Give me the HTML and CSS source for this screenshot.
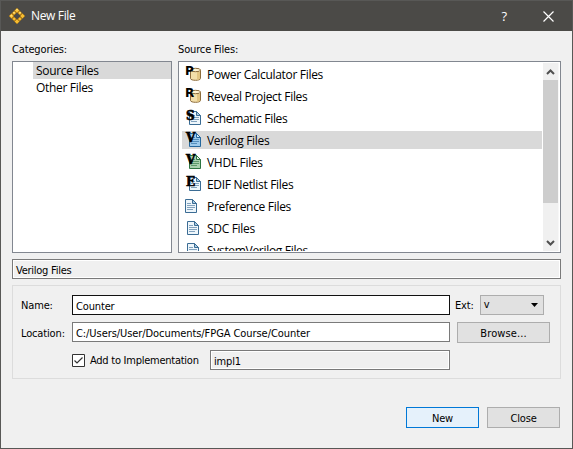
FILE: index.html
```html
<!DOCTYPE html>
<html lang="en">
<head>
<meta charset="utf-8">
<title>New File</title>
<link rel="stylesheet" href="styles.css">
</head>
<body>
<svg class="defs" width="0" height="0">
  <defs>
    <g id="sheet">
      <path class="page" d="M3.500 1.500h7l4 4v9h-11z"/>
      <path class="fold" d="M10.500 1.500v4h4z"/>
      <path class="rule" d="M5 5.500h4M5 7.500h8M5 9.500h8M5 11.500h6"/>
    </g>
    <g id="drum">
      <path d="M4.500 4v8.500c0 2.400 10 2.400 10 0V4z" fill="#f3dfaa" stroke="#8c6c3c"/>
      <path d="M11 6h3v7l-3 1z" fill="#e2c583"/>
      <ellipse cx="9.500" cy="4" rx="5" ry="1.700" fill="#fff4d2" stroke="#8c6c3c"/>
    </g>
  </defs>
</svg>
<div class="window">
  <header class="titlebar">
    <svg class="logo" width="16" height="16" viewBox="0 0 16 16">
      <path d="M8 2.200 13.800 8 8 13.800 2.200 8z" fill="none" stroke="#a87515" stroke-width="2"/>
      <g fill="#f6bd31" stroke="#a36f13" stroke-width=".5">
        <path d="M8 0l2.500 2.500L8 5 5.500 2.500zM8 11l2.500 2.500L8 16l-2.500-2.500zM2.500 5.500 5 8l-2.500 2.500L0 8zM13.500 5.500 16 8l-2.500 2.500L11 8z"/>
        <path d="M5.200 3l2 2-2 2-2-2zM10.800 3l2 2-2 2-2-2zM5.200 9l2 2-2 2-2-2zM10.800 9l2 2-2 2-2-2z"/>
      </g>
      <path d="M8 .8l1 1-1 1-1-1zM5 3.800l1 1-1 1-1-1zM2.200 6.800l1 1-1 1-1-1zM11 3.800l1 1-1 1-1-1z" fill="#ffe58a"/>
    </svg>
    <span class="title">New File</span>
    <span class="help">?</span>
    <svg class="x" width="11" height="11" viewBox="0 0 11 11"><path d="M.5.5l10 10M10.500.5l-10 10" stroke="#fff" stroke-width="1.200"/></svg>
  </header>
  <main class="content">
    <section class="lists">
      <div class="column categories">
        <div class="label">Categories:</div>
        <div class="list">
          <div class="cat selected">Source Files</div>
          <div class="cat">Other Files</div>
        </div>
      </div>
      <div class="column sources">
        <div class="label">Source Files:</div>
        <div class="list split">
          <div class="rows">
            <div class="row"><svg class="icon" viewBox="0 0 16 16"><use href="#drum"/><text x="-1" y="9">P</text></svg><span>Power Calculator Files</span></div>
            <div class="row"><svg class="icon" viewBox="0 0 16 16"><use href="#drum"/><text x="-1" y="9">R</text></svg><span>Reveal Project Files</span></div>
            <div class="row"><svg class="icon" viewBox="0 0 16 16"><use href="#sheet"/><text class="serif" x="0" y="10">S</text></svg><span>Schematic Files</span></div>
            <div class="row selected"><svg class="icon blue" viewBox="0 0 16 16"><use href="#sheet"/><text class="serif" x="0" y="10">V</text></svg><span>Verilog Files</span></div>
            <div class="row"><svg class="icon green" viewBox="0 0 16 16"><use href="#sheet"/><text class="serif" x="0" y="10">V</text></svg><span>VHDL Files</span></div>
            <div class="row"><svg class="icon" viewBox="0 0 16 16"><use href="#sheet"/><text class="serif" x="0" y="10">E</text></svg><span>EDIF Netlist Files</span></div>
            <div class="row"><svg class="icon" viewBox="0 0 16 16"><use href="#sheet" x="-4"/></svg><span>Preference Files</span></div>
            <div class="row"><svg class="icon" viewBox="0 0 16 16"><use href="#sheet" x="-2"/></svg><span>SDC Files</span></div>
            <div class="row"><svg class="icon" viewBox="0 0 16 16"><use href="#sheet" x="-2"/></svg><span>SystemVerilog Files</span></div>
          </div>
          <div class="scrollbar">
            <svg width="15" height="17" viewBox="0 0 15 17"><path d="M4 11 7.500 7.500 11 11" class="chevron"/></svg>
            <div class="thumb"></div>
            <svg class="down" width="15" height="17" viewBox="0 0 15 17"><path d="M4 7 7.500 10.500 11 7" class="chevron"/></svg>
          </div>
        </div>
      </div>
    </section>
    <div class="field readonly description">Verilog Files</div>
    <section class="group">
      <span class="label name">Name:</span>
      <div class="field focus">Counter</div>
      <div class="ext"><span class="label">Ext:</span><div class="button combo"><span>v</span><svg width="7" height="4" viewBox="0 0 7 4"><path d="M0 0h7L3.500 4z"/></svg></div></div>
      <span class="label location">Location:</span>
      <div class="field path">C:/Users/User/Documents/FPGA Course/Counter</div>
      <div class="button browse">Browse...</div>
      <div class="implementation">
        <svg width="13" height="13" viewBox="0 0 13 13"><path d="M.5.5h12v12H.5z" fill="#fff" stroke="#333"/><path d="M2.500 6.500 5 9l5.500-5.500" fill="none" stroke="#333" stroke-width="1.200"/></svg>
        <span class="check-label">Add to Implementation</span>
        <div class="field readonly">impl1</div>
      </div>
    </section>
    <footer class="actions">
      <div class="button primary">New</div>
      <div class="button">Close</div>
    </footer>
  </main>
</div>
</body>
</html>
```
FILE: styles.css
```css
* { box-sizing: border-box; }
body { margin: 0; font: 11px/14px "DejaVu Sans Condensed", "DejaVu Sans", sans-serif; font-stretch: condensed; letter-spacing: -.15px; color: #000; overflow: hidden; }
.defs { position: absolute; }
svg { display: block; flex: none; }
.window { width: 573px; height: 449px; background: #f0f0f0; border: 1px solid #585856; }
.titlebar { height: 30px; background: #4b4a47; display: flex; align-items: center; padding: 0 18px 0 8px; color: #fff; font: 12px/16px "Open Sans", sans-serif; }
.title { margin-left: 6px; flex: 1; letter-spacing: -.35px; }
.help { font-size: 13px; margin-right: 36px; }
.content { padding: 10px 11px 0; display: flex; flex-direction: column; }
.lists { display: flex; gap: 6px; }
.column { display: flex; flex-direction: column; }
.column > .label { height: 20px; padding-top: 2px; }
.categories { width: 160px; }
.sources { width: 383px; }
.list { height: 192px; border: 1px solid #828790; background: #fff; overflow: hidden; font: 12px/17px "Open Sans", sans-serif; letter-spacing: -.31px; }
.cat { height: 17px; margin-left: 20px; padding-left: 3px; white-space: nowrap; }
.selected { background: #d9d9d9; }
.split { display: flex; padding: 1px 0 1px 1px; }
.rows { flex: 1; padding-top: 2px; display: flex; flex-direction: column; gap: 4px; overflow: hidden; margin: 0 1px 0 2px; }
.row { height: 18px; flex: none; display: flex; align-items: center; padding-left: 4px; gap: 5px; white-space: nowrap; }
.icon { width: 16px; height: 16px; overflow: visible; --line: #3b6c94; --paper: #eef6fb; --shade: #a8cbe2; font: bold 12px "DejaVu Sans", sans-serif; }
.serif { font-family: "DejaVu Serif", serif; stroke: #000; stroke-width: .6px; }
.blue { --paper: #9dcaeb; --shade: #d5eafa; --line: #24679d; }
.green { --paper: #a8d0ae; --shade: #e2f2e3; --line: #2c7441; }
.page { fill: var(--paper); stroke: var(--line); }
.fold { fill: var(--shade); stroke: var(--line); }
.rule { stroke: var(--line); opacity: .6; }
.scrollbar { width: 16px; background: #f0f0f0; display: flex; flex-direction: column; border-right: 1px solid #f7f7f7; margin-right: 1px; }
.thumb { height: 123px; background: #cdcdcd; }
.down { margin-top: auto; }
.chevron { fill: none; stroke: #505050; stroke-width: 2; }
.field { height: 20px; border: 1px solid #7a7a7a; background: #fff; padding: 4px 3px 0; white-space: nowrap; }
.readonly { background: #f0f0f0; box-shadow: inset 0 0 0 1px #fff; }
.description { margin-top: 6px; letter-spacing: -.25px; }
.path { letter-spacing: -.07px; }
.focus { border-color: #111; }
.group { height: 94px; margin-top: 6px; border: 1px solid #dcdcdc; display: grid; grid-template-columns: 51px 378px 94px; grid-template-rows: 20px 21px 20px; row-gap: 7px; padding: 9px 8px; align-items: start; }
.group > .label { padding-top: 4px; }
.group > .location { padding-top: 5px; }
.ext { display: flex; margin-left: 5px; }
.ext .label { width: 27px; padding-top: 4px; }
.button { height: 21px; border: 1px solid #adadad; background: #e1e1e1; display: flex; align-items: center; justify-content: center; padding-top: 2px; }
.combo { height: 20px; width: 69px; padding: 0 5px 0 3px; justify-content: space-between; }
.browse { margin-left: 7px; width: 93px; letter-spacing: .1px; }
.implementation { grid-column: 2; display: flex; align-items: center; }
.check-label { width: 120px; margin-left: 5px; padding-top: 1px; white-space: nowrap; letter-spacing: -.25px; }
.implementation .field { width: 240px; }
.actions { display: flex; justify-content: flex-end; gap: 8px; padding-right: 1px; margin-top: 28px; }
.actions .button { width: 73px; }
.actions .primary { background: #e5f1fb; border-color: #0078d7; }
```
